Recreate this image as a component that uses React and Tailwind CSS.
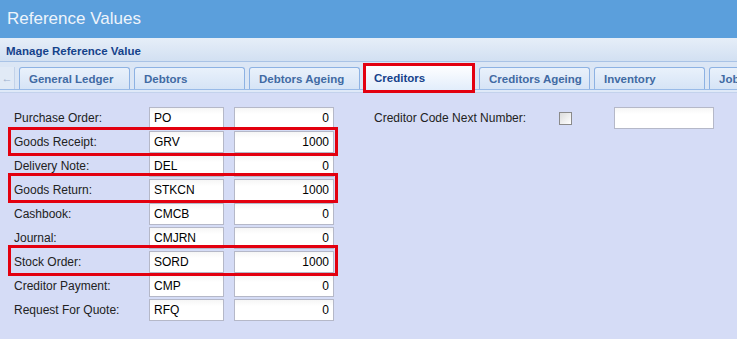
const rows = [
  { label: "Purchase Order:", code: "PO", next: "0" },
  { label: "Goods Receipt:", code: "GRV", next: "1000" },
  { label: "Delivery Note:", code: "DEL", next: "0" },
  { label: "Goods Return:", code: "STKCN", next: "1000" },
  { label: "Cashbook:", code: "CMCB", next: "0" },
  { label: "Journal:", code: "CMJRN", next: "0" },
  { label: "Stock Order:", code: "SORD", next: "1000" },
  { label: "Creditor Payment:", code: "CMP", next: "0" },
  { label: "Request For Quote:", code: "RFQ", next: "0" },
];

const tabs = ["General Ledger", "Debtors", "Debtors Ageing", "Creditors", "Creditors Ageing", "Inventory", "Job"];

function Field({ value, className, right }) {
  return (
    <div
      className={`h-[22px] border border-[#b5b8c8] bg-gradient-to-b from-[#f6f6f6] to-white to-[30%] px-[4px] flex items-center text-[12px] text-black ${right ? "justify-end" : ""} ${className}`}
    >
      {value}
    </div>
  );
}

export default function App() {
  return (
    <div className="w-[737px] h-[339px] overflow-hidden flex flex-col bg-[#d5dcf6] relative" style={{ fontFamily: '"Liberation Sans", Arial, sans-serif' }}>
      <div className="h-[38px] shrink-0 bg-[#5b9fdc] flex items-center pl-[7px] text-[17px] text-[#eef4fb]">
        Reference Values
      </div>
      <div className="h-[24px] shrink-0 bg-gradient-to-b from-[#e6eef8] to-[#d2e0f2] border-b border-[#a9c3e6] flex items-center pl-[6px] text-[11.5px] font-bold text-[#15428b] pt-[4px]">
        Manage Reference Value
      </div>
      <div className="h-[31px] shrink-0 bg-[#dbe6f5] flex flex-col">
        <div className="flex items-end h-[27px] relative">
          <div className="w-[15px] shrink-0 h-[22px] flex items-center justify-center text-[#9bb0cc] text-[11px] bg-[#e1eaf6] border-r border-[#c3d3ea]">←</div>
          <div className="flex gap-[4px] ml-[4px] items-end shrink-0">
            {tabs.map((t) =>
              t === "Creditors" ? (
                <div key={t} className="w-[111px] h-[26px] shrink-0 rounded-t-[3px] border border-b-0 border-[#8db2e3] bg-gradient-to-b from-white to-[#e2edfb] flex items-center pl-[9px] pt-[3px] text-[11.5px] font-bold text-[#15428b] mb-[-1px] z-10">
                  {t}
                </div>
              ) : (
                <div key={t} className="w-[111px] h-[22px] shrink-0 rounded-t-[3px] border border-b-0 border-[#8db2e3] bg-gradient-to-b from-[#e9f1fb] to-[#d6e4f6] flex items-center pl-[9px] pt-[2px] text-[11.5px] font-bold text-[#416aa3]">
                  {t}
                </div>
              )
            )}
          </div>
        </div>
        <div className="h-[4px] bg-[#dfe9f8] border-t border-[#99bbe8] border-b border-b-[#c3d2ec]" />
      </div>

      <div className="relative flex-1 flex pt-[13px] text-[12px] text-[#222]">
        <div className="pl-[14px] flex flex-col">
          {rows.map((r) => (
            <div key={r.label} className="h-[24px] flex items-center">
              <div className="w-[135px]">{r.label}</div>
              <Field value={r.code} className="w-[75px]" />
              <Field value={r.next} className="w-[100px] ml-[10px]" right />
            </div>
          ))}
        </div>
        <div className="ml-[40px] h-[24px] flex items-center">
          <div className="w-[185px]">Creditor Code Next Number:</div>
          <div className="w-[13px] h-[13px] border border-[#8a8a8a] bg-gradient-to-br from-[#dcdcdc] to-white" />
          <Field value="" className="w-[100px] ml-[42px]" />
        </div>

        <div className="absolute left-[8px] top-[34px] w-[330px] h-[29px] border-[3px] border-[#e3000f]" />
        <div className="absolute left-[8px] top-[80px] w-[330px] h-[30px] border-[3px] border-[#e3000f]" />
        <div className="absolute left-[8px] top-[152px] w-[330px] h-[31px] border-[3px] border-[#e3000f]" />
      </div>

      <div className="absolute left-[363px] top-[63px] w-[112px] h-[30px] border-[3px] border-[#e3000f] z-20" />
    </div>
  );
}
